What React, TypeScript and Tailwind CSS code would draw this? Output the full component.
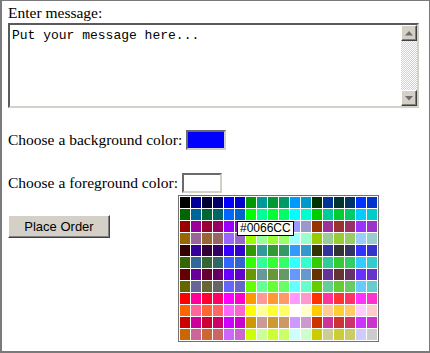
const reds = ["00", "99", "33", "66", "FF", "CC"]
const greensEven = ["00", "99", "33"]
const greensOdd = ["66", "FF", "CC"]
const blues = ["00", "99", "33", "66", "FF", "CC"]

const palette: string[][] = Array.from({ length: 12 }, (_, row) => {
  const r = reds[Math.floor(row / 2)]
  const greens = row % 2 === 0 ? greensEven : greensOdd
  return greens.flatMap((g) => blues.map((b) => `#${r}${g}${b}`))
})

const Arrow = ({ down }: { down?: boolean }) => (
  <svg width="8" height="5" viewBox="0 0 8 5">
    {down ? (
      <polygon points="0,0 8,0 4,4.5" fill="#6e6e6e" />
    ) : (
      <polygon points="0,4.5 8,4.5 4,0" fill="#6e6e6e" />
    )}
  </svg>
)

const ScrollButton = ({ down }: { down?: boolean }) => (
  <div className="flex h-[16px] w-[16px] items-center justify-center border border-t-white border-l-white border-r-[#404040] border-b-[#404040] bg-[#d4d0c8] shadow-[inset_-1px_-1px_0_#808080]">
    <Arrow down={down} />
  </div>
)

const Swatch = ({ color }: { color: string }) => (
  <div
    className="h-[20px] w-[40px] border-2 border-t-[#6a6a6a] border-l-[#6a6a6a] border-r-[#d4d0c8] border-b-[#d4d0c8]"
    style={{ background: color }}
  />
)

const App: React.FC = () => {
  return (
    <div className="relative h-[353px] w-[430px] overflow-hidden border-t border-l-2 border-r border-b-2 border-[#7a7a7a] bg-white px-[6px] font-['Liberation_Serif',serif] text-[15.5px] leading-[18px] text-black">
      <div className="mt-[3px]">Enter message:</div>

      <div className="mt-[1px] flex h-[85px] w-[411px] border-2 border-t-[#5a5a5a] border-l-[#5a5a5a] border-r-[#d4d0c8] border-b-[#d4d0c8] bg-white">
        <div className="flex-1 px-[2px] pt-[3px] font-['Liberation_Mono',monospace] text-[13px] leading-[15px]">
          Put your message here...
        </div>
        <div className="flex w-[16px] flex-col bg-[repeating-conic-gradient(#d4d0c8_0_25%,#ffffff_0_50%)] bg-[length:2px_2px]">
          <ScrollButton />
          <div className="flex-1" />
          <ScrollButton down />
        </div>
      </div>

      <div className="mt-[22px] flex h-[20px] items-center gap-[4px]">
        <span>Choose a background color:</span>
        <Swatch color="#0000ff" />
      </div>

      <div className="mt-[23px] flex h-[20px] items-center gap-[4px]">
        <span>Choose a foreground color:</span>
        <Swatch color="#ffffff" />
      </div>

      <button className="mt-[22px] flex h-[23px] w-[102px] items-center justify-center border border-t-white border-l-white border-r-[#404040] border-b-[#404040] bg-[#d4d0c8] font-['Liberation_Sans',sans-serif] text-[13px] shadow-[inset_-1px_-1px_0_#808080]">
        Place Order
      </button>

      <div className="absolute left-[176px] top-[194px] border border-[#707070] bg-white p-[1px]">
        <div className="grid grid-cols-[repeat(18,10px)] auto-rows-[11px] gap-[1px]">
          {palette.flat().map((c, i) => (
            <div key={i} style={{ background: c }} />
          ))}
        </div>
      </div>

      <div className="absolute left-[235px] top-[220px] border border-black bg-[#fffff4] px-[2px] font-['Liberation_Sans',sans-serif] text-[12px] leading-[13px]">
        #0066CC
      </div>
    </div>
  )
}

export default App
